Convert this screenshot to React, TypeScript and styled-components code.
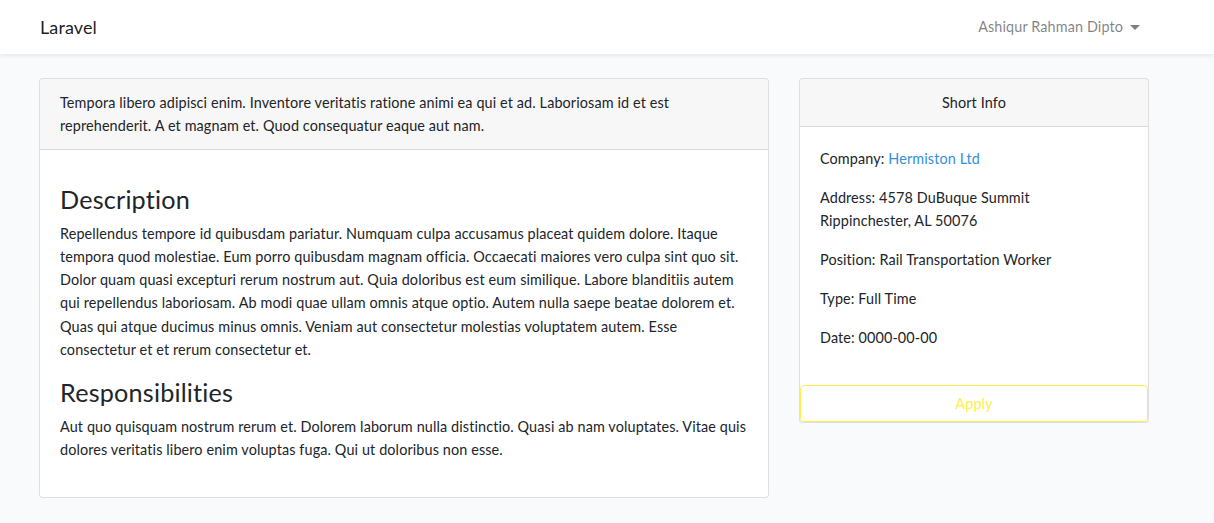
import React from "react";
import styled, { createGlobalStyle } from "styled-components";

const Global = createGlobalStyle`
  * { box-sizing: border-box; }
  body {
    margin: 0;
    background: #f8fafc;
    font-family: Lato, "Noto Sans", sans-serif;
    font-size: 14.4px;
    letter-spacing: 0.12px;
    line-height: 1.6;
    color: #212529;
  }
`;

const Navbar = styled.nav`
  background: #fff;
  box-shadow: 0 2px 4px rgba(0, 0, 0, 0.075);
  height: 54px;
  display: flex;
  align-items: center;
  justify-content: space-between;
  padding: 0 74px 0 40px;
`;

const Brand = styled.a`
  font-size: 18px;
  color: rgba(0, 0, 0, 0.9);
  text-decoration: none;
`;

const UserLink = styled.a`
  color: rgba(0, 0, 0, 0.5);
  text-decoration: none;
  display: flex;
  align-items: center;
  gap: 7px;
  &::after {
    content: "";
    border-top: 5px solid currentColor;
    border-left: 5px solid transparent;
    border-right: 5px solid transparent;
    margin-top: 1px;
  }
`;

const Main = styled.main`
  padding: 24px 65px 24px 39px;
  display: grid;
  grid-template-columns: 730px 350px;
  column-gap: 30px;
  align-items: start;
`;

const Card = styled.div`
  background: #fff;
  border: 1px solid rgba(0, 0, 0, 0.125);
  border-radius: 4px;
  display: flex;
  flex-direction: column;
  overflow: hidden;
`;

const CardHeader = styled.div<{ $center?: boolean }>`
  background: rgba(0, 0, 0, 0.03);
  border-bottom: 1px solid rgba(0, 0, 0, 0.125);
  padding: 12px 20px;
  text-align: ${(p) => (p.$center ? "center" : "left")};
`;

const CardBody = styled.div<{ $top?: number }>`
  padding: ${(p) => p.$top ?? 20}px 20px 20px;
`;

const Heading = styled.h3`
  font-size: 25.2px;
  font-weight: 400;
  letter-spacing: 0.2px;
  line-height: 1.2;
  margin: 0 0 8px;
`;

const Para = styled.p`
  margin: 0 0 16px;
`;

const Link = styled.a`
  color: #3490dc;
  text-decoration: none;
`;

const ApplyButton = styled.button`
  display: block;
  width: 100%;
  font: inherit;
  letter-spacing: inherit;
  line-height: 1.6;
  padding: 6px 12px;
  background: transparent;
  color: #ffed4a;
  border: 1px solid #ffed4a;
  border-radius: 4px;
  margin: 0;
`;

export default function App() {
  return (
    <>
      <Global />
      <Navbar>
        <Brand>Laravel</Brand>
        <UserLink>Ashiqur Rahman Dipto</UserLink>
      </Navbar>
      <Main>
        <Card>
          <CardHeader>
            Tempora libero adipisci enim. Inventore veritatis ratione animi ea qui et ad. Laboriosam id et est
            reprehenderit. A et magnam et. Quod consequatur eaque aut nam.
          </CardHeader>
          <CardBody $top={34}>
            <Heading>Description</Heading>
            <Para>
              Repellendus tempore id quibusdam pariatur. Numquam culpa accusamus placeat quidem dolore. Itaque
              tempora quod molestiae. Eum porro quibusdam magnam officia. Occaecati maiores vero culpa sint quo sit.
              Dolor quam quasi excepturi rerum nostrum aut. Quia doloribus est eum similique. Labore blanditiis autem
              qui repellendus laboriosam. Ab modi quae ullam omnis atque optio. Autem nulla saepe beatae dolorem et.
              Quas qui atque ducimus minus omnis. Veniam aut consectetur molestias voluptatem autem. Esse
              consectetur et et rerum consectetur et.
            </Para>
            <Heading>Responsibilities</Heading>
            <Para>
              Aut quo quisquam nostrum rerum et. Dolorem laborum nulla distinctio. Quasi ab nam voluptates. Vitae quis
              dolores veritatis libero enim voluptas fuga. Qui ut doloribus non esse.
            </Para>
          </CardBody>
        </Card>
        <Card>
          <CardHeader $center>Short Info</CardHeader>
          <CardBody>
            <Para>
              Company: <Link>Hermiston Ltd</Link>
            </Para>
            <Para>
              Address: 4578 DuBuque Summit
              <br />
              Rippinchester, AL 50076
            </Para>
            <Para>Position: Rail Transportation Worker</Para>
            <Para>Type: Full Time</Para>
            <Para>Date: 0000-00-00</Para>
          </CardBody>
          <ApplyButton>Apply</ApplyButton>
        </Card>
      </Main>
    </>
  );
}
